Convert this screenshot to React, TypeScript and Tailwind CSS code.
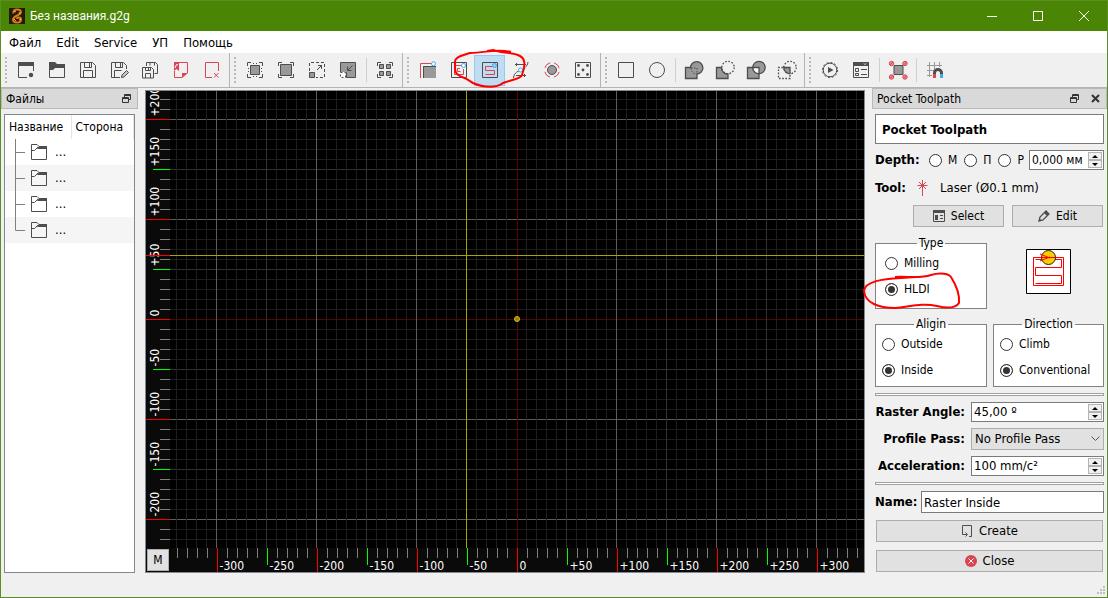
import React, { useEffect, useRef, useState } from 'react';

const DARK = '#4d4d4d';
const RED = '#da4453';
const GRAY = '#999999';
const BLUE = '#3daee9';

const icons: Record<string, React.ReactNode> = {
  new: (
    <>
      <path d="M0 0h16v4H0z" fill={DARK} />
      <path d="M0.5 4v11.5H9M15.5 4v5" fill="none" stroke={DARK} />
      <circle cx="13" cy="13" r="2.2" fill={DARK} />
    </>
  ),
  open: (
    <>
      <path d="M0 0h6l2 2h8v4H6L4 8H0z" fill={DARK} />
      <path d="M0.5 7v8.5h15V5" fill="none" stroke={DARK} />
    </>
  ),
  save: (
    <path d="M0.5 0.5h12l3 3v12H0.5zM4.5 0.5v5h7v-5M9.5 1v4M3.5 15.5v-7h9v7" fill="none" stroke={DARK} />
  ),
  saveAs: (
    <>
      <path d="M9 15.5H0.5V0.5h12l3 3V7M4.5 0.5v5h7v-5M9.5 1v4M3.5 15.5v-7h7" fill="none" stroke={DARK} />
      <path d="M10.5 15.5l0.5-2.5 4.5-4.5 2 2-4.5 4.5z" fill="#c4c4c4" stroke={DARK} />
    </>
  ),
  saveAll: (
    <>
      <path d="M4.5 4V0.5h9l2 2v9h-3M8 0.5v3M12.5 0.5v3" fill="none" stroke={DARK} />
      <path d="M0.5 5.5h9l2 2v8.5h-11zM3.5 5.5v3h5v-3M6.5 6v2M3.5 16v-4.5h5v4.5" fill="none" stroke={DARK} />
    </>
  ),
  exportPdf: (
    <>
      <path d="M1 0h5v9L3.5 7 1 9z" fill={RED} />
      <path d="M2 6l1.5-3.5L5 3" fill="none" stroke="#fff" />
      <path d="M6 0.5h8.5V11M1.5 9v6.5H9" fill="none" stroke={RED} />
      <path d="M9 16v-5h6z" fill={RED} />
    </>
  ),
  closeDoc: (
    <path d="M8 15.5H1.5V0.5h13V9M10 11l4.5 4.5M14.5 11L10 15.5" fill="none" stroke={RED} />
  ),
  fit: (
    <>
      <path d="M0.5 4V0.5H4M12 0.5h3.5V4M15.5 12v3.5H12M4 15.5H0.5V12" fill="none" stroke={DARK} />
      <path d="M3.5 3.5h9v9h-9z" fill={GRAY} stroke={DARK} />
      <path d="M6 1.5h1M9 1.5h1M6 14.5h1M9 14.5h1M1.5 6v1M1.5 9v1M14.5 6v1M14.5 9v1" stroke={DARK} />
    </>
  ),
  fitAll: (
    <>
      <path d="M0.5 4V0.5H4M12 0.5h3.5V4M15.5 12v3.5H12M4 15.5H0.5V12" fill="none" stroke={DARK} />
      <path d="M2.5 2.5h11v11h-11z" fill={GRAY} stroke={DARK} />
    </>
  ),
  zoomIn: (
    <>
      <path d="M0.5 9V0.5h15v15H7" fill="none" stroke={DARK} strokeDasharray="3 2" />
      <path d="M0.5 10.5h5v5h-5z" fill={GRAY} stroke={DARK} />
      <path d="M8 8l4.5-4.5M9 3.5h3.5V7" fill="none" stroke={DARK} />
    </>
  ),
  zoomOut: (
    <>
      <path d="M0.5 0.5h15v15h-9v-5h-6z" fill={GRAY} stroke={DARK} />
      <path d="M12.5 3.5L8 8M7.5 4.5v4h4" fill="none" stroke={DARK} />
      <path d="M0.5 10.5h5v5h-5z" fill="#fff" stroke="#fff" />
      <path d="M0.5 10.5h5v5h-5z" fill="none" stroke={DARK} strokeDasharray="2 2" />
    </>
  ),
  objects: (
    <>
      <path d="M0.5 4V0.5H4M12 0.5h3.5V4M15.5 12v3.5H12M4 15.5H0.5V12" fill="none" stroke={DARK} />
      <path d="M2.5 2.5h4v4h-4zM9.5 2.5h4v4h-4zM2.5 9.5h4v4h-4zM9.5 9.5h4v4h-4z" fill={GRAY} stroke={DARK} />
    </>
  ),
  profile: (
    <>
      <path d="M3 4h13v12H3z" fill={GRAY} />
      <path d="M3.5 16V4.5H16" fill="none" stroke={DARK} />
      <path d="M0.5 16V1.5H12" fill="none" stroke={RED} />
      <circle cx="13.5" cy="1.8" r="2" fill="#fff" stroke={BLUE} />
    </>
  ),
  pocket: (
    <>
      <path d="M0.5 0.5h15v15h-15z" fill="none" stroke={DARK} />
      <path d="M11 3.5H3.5v9h9V7M9 6.5H6.5v3h3" fill="none" stroke={RED} />
      <circle cx="12.5" cy="3.5" r="2" fill="#fff" stroke={BLUE} />
    </>
  ),
  raster: (
    <>
      <path d="M0.5 0.5h15v15h-15z" fill="none" stroke={DARK} />
      <path d="M11 4.5H3.5v4h9v4h-9" fill="none" stroke={RED} />
      <circle cx="12.5" cy="3.5" r="2" fill="#8fcdf3" stroke={BLUE} />
    </>
  ),
  thread: (
    <>
      <path d="M0.5 16C1 10 6 9 8 8s6.5-3 7-8" fill="none" stroke={DARK} />
      <path d="M2 2.5h11M4 1L2.500 2.500 4 4M3 13.5h10M11 12l1.500 1.500L11 15" fill="none" stroke={DARK} />
      <circle cx="7.5" cy="8" r="2" fill="#fff" stroke={BLUE} />
    </>
  ),
  drill: (
    <>
      <circle cx="8" cy="8" r="4.5" fill={GRAY} stroke={DARK} />
      <circle cx="8" cy="8" r="7.4" fill="none" stroke={RED} strokeDasharray="7.6 4" strokeDashoffset="-2" />
    </>
  ),
  points: (
    <>
      <path d="M0.5 0.5h15v15h-15z" fill="none" stroke={DARK} />
      {[[3.5, 3.5], [12.5, 3.5], [8, 8], [3.5, 12.5], [12.5, 12.5]].map(([x, y]) => (
        <circle key={`${x}-${y}`} cx={x} cy={y} r="1.4" fill={DARK} />
      ))}
    </>
  ),
  rect: <path d="M0.5 0.5h15v15h-15z" fill="none" stroke={DARK} />,
  circle: <circle cx="8" cy="8" r="7.5" fill="none" stroke={DARK} />,
  union: (
    <>
      <path d="M-0.5 5.5H4.5a6.2 6.2 0 1 1 6.5 6.5v4.5h-11.5z" fill={GRAY} stroke={DARK} strokeWidth="1.3" />
      <path d="M5 6h6v6M5 6c0 3 2 6 6 6" fill="none" stroke={DARK} strokeDasharray="1.5 1.5" />
    </>
  ),
  subtract: (
    <>
      <path d="M-0.5 5.5H4.5a6.2 6.2 0 0 0 6.5 6.5v4.5h-11.5z" fill={GRAY} stroke={DARK} strokeWidth="1.3" />
      <circle cx="11" cy="5.5" r="6.2" fill="none" stroke={DARK} strokeWidth="1.3" strokeDasharray="1.6 1.6" />
    </>
  ),
  exclude: (
    <>
      <path d="M-0.5 5.5H11v11H-0.5z" fill={GRAY} stroke={DARK} strokeWidth="1.3" />
      <circle cx="11" cy="5.5" r="6.2" fill={GRAY} stroke={DARK} strokeWidth="1.3" />
      <path d="M4.8 5.5H11v6.2A6.2 6.2 0 0 1 4.8 5.5z" fill="#fff" stroke={DARK} strokeWidth="1.3" />
    </>
  ),
  intersect: (
    <>
      <path d="M4 5.5h-4.5v11H11v-4" fill="none" stroke={DARK} strokeWidth="1.3" strokeDasharray="1.6 1.6" />
      <circle cx="11" cy="5.5" r="6.2" fill="none" stroke={DARK} strokeWidth="1.3" strokeDasharray="1.6 1.6" />
      <path d="M4.8 5.5H11v6.2A6.2 6.2 0 0 1 4.8 5.5z" fill={GRAY} stroke={DARK} strokeWidth="1.3" />
    </>
  ),
  run: (
    <>
      <circle cx="8" cy="8" r="6.8" fill="none" stroke={DARK} />
      <circle cx="8" cy="8" r="7.6" fill="none" stroke={DARK} strokeDasharray="2 2" />
      <path d="M6 5l5.500 3L6 11z" fill={DARK} />
    </>
  ),
  form: (
    <>
      <path d="M0 0h16v4H0z" fill={DARK} />
      <path d="M11 1.5l1 1 1-1" fill="none" stroke="#fff" />
      <path d="M0.5 4v11.5h15V4M2.5 6.5h3v3h-3zM2.5 11.5h3v2h-3zM8 7.5h6M8 12.5h6" fill="none" stroke={DARK} />
    </>
  ),
  snap: (
    <>
      <path d="M4 3.5h9v9H4z" fill={GRAY} stroke={DARK} />
      {[[1.5, 1.5], [15, 1.5], [1.5, 15], [15, 15]].map(([x, y]) => (
        <g key={`${x}-${y}`}>
          <circle cx={x} cy={y} r="2.2" fill="#e98f98" stroke={RED} />
          <path d={`M${x - 1.5} ${y + 1.5}l3-3`} stroke={RED} />
        </g>
      ))}
    </>
  ),
  magnet: (
    <>
      <path d="M0 3.5h15M0 8.5h8M0 13.5h5M2.5 0v15M7.5 0v8M12.5 0v5" stroke={GRAY} />
      <path d="M7.5 16v-5a3.5 3.5 0 0 1 7 0v5" fill="none" stroke={DARK} strokeWidth="3" />
      <path d="M6 12h3v4H6z" fill={RED} />
      <path d="M13 12h3v4h-3z" fill={BLUE} />
    </>
  ),
};

const toolbars: { label: string; tools: string[] }[] = [
  { label: 'File', tools: ['new', 'open', 'save', 'saveAs', 'saveAll', 'exportPdf', 'closeDoc'] },
  { label: 'View', tools: ['fit', 'fitAll', 'zoomIn', 'zoomOut', '|', 'objects'] },
  { label: 'Toolpath', tools: ['profile', 'pocket', 'raster', 'thread', 'drill', 'points'] },
  { label: 'Shapes', tools: ['rect', 'circle', '|', 'union', 'subtract', 'exclude', 'intersect'] },
  { label: 'Service', tools: ['run', 'form', '|', 'snap', '|', 'magnet'] },
];

const ToolIcon = ({ name }: { name: string }) => (
  <svg width="16" height="16" viewBox="0 0 16 16" className="overflow-visible">
    {icons[name]}
  </svg>
);

const TitleBar = () => (
  <header className="flex h-[30px] shrink-0 items-center bg-[#4a8505] pl-2 text-white">
    <svg width="16" height="16" viewBox="0 0 16 16">
      <path d="M0 0h16v16H0z" fill="#241a0c" />
      <path d="M4.5 5.5C3 0 12.5 0.5 12 4.5C11.5 7.5 4.5 7.5 4 11.5C4 15.5 12 15.5 12 11.5C12 8.5 8 9 8 11" fill="none" stroke="#e07b12" strokeWidth="2" />
      <path d="M5 3l2 1M10 4l1 2M5 11l2 2M10 12l2-1" stroke="#f7d9a0" strokeWidth="0.8" />
    </svg>
    <h1 className="ml-[5px] flex-1 font-[Roboto,sans-serif] text-[12px]">Без названия.g2g</h1>
    <button aria-label="Minimize" className="flex h-full w-[46px] items-center justify-center">
      <svg width="10" height="10"><path d="M0 5.5h10" stroke="#fff" /></svg>
    </button>
    <button aria-label="Maximize" className="flex h-full w-[46px] items-center justify-center">
      <svg width="10" height="10"><path d="M0.5 0.5h9v9h-9z" fill="none" stroke="#fff" /></svg>
    </button>
    <button aria-label="Close window" className="flex h-full w-[46px] items-center justify-center">
      <svg width="10" height="10"><path d="M0 0l10 10M10 0L0 10" stroke="#fff" /></svg>
    </button>
  </header>
);

const MenuBar = () => (
  <nav className="flex h-[22px] shrink-0 items-center gap-[15px] bg-white pt-px pl-2 text-[13px]">
    {['Файл', 'Edit', 'Service', 'УП', 'Помощь'].map(item => (
      <button key={item}>{item}</button>
    ))}
  </nav>
);

const Toolbar = () => {
  const [active, setActive] = useState('raster');

  return (
    <div className="relative flex h-[35px] shrink-0 border-b border-[#b4b4b4]">
      {toolbars.map((bar, i) => (
        <div
          key={bar.label}
          role="toolbar"
          aria-label={bar.label}
          className={`flex items-center pr-0.5 ${i < toolbars.length - 1 ? 'border-r border-[#b4b4b4]' : ''}`}
        >
          <svg width="9" height="28" className="shrink-0">
            {[0, 1, 2, 3, 4, 5, 6].map(n => (
              <rect key={n} x="4" y={1 + n * 4} width="2" height="2" fill="#b9b9b9" />
            ))}
          </svg>
          {bar.tools.map((tool, n) =>
            tool === '|' ? (
              <span key={n} className="mx-[2px] h-6 w-[2px] border-r border-[#cfcfcf]" />
            ) : (
              <button
                key={tool}
                aria-label={tool}
                onClick={() => setActive(tool)}
                className={`flex h-[31px] w-[31px] items-center border pl-[7px] ${
                  active === tool ? 'border-[#99c9ef] bg-[#c0dcf3]' : 'border-transparent'
                }`}
              >
                <ToolIcon name={tool} />
              </button>
            )
          )}
        </div>
      ))}
      <svg width="80" height="46" className="pointer-events-none absolute top-[-6px] left-[450px]">
        <path
          d="M60 5C45 1 35 6 19 6C10 9 3 10 4 16C4 23 3 27 11 30C17 32 20 35 22 36C33 41 46 41 52 36C60 33 70 32 71 28C74 20 75 12 69 9C61 5 50 6 42 3L36 4"
          fill="none"
          stroke="#f00"
          strokeWidth="2"
        />
      </svg>
    </div>
  );
};

const DockTitle = ({ title, closable }: { title: string; closable?: boolean }) => (
  <div className="flex h-[21px] shrink-0 items-center gap-3 border border-[#b9b9b9] bg-[#d9d9d9] pr-1.5 pl-1">
    <h2 className="flex-1">{title}</h2>
    <button aria-label="Float">
      <svg width="9" height="9">
        <path d="M2.5 3V0.5h6v5H6M2 1.5h7M0.5 3.5h6v5h-6zM0 4.5h6" fill="none" stroke="#333" />
      </svg>
    </button>
    {closable && (
      <button aria-label="Close panel">
        <svg width="9" height="9"><path d="M1 1l7 7M8 1L1 8" stroke="#333" strokeWidth="2" /></svg>
      </button>
    )}
  </div>
);

const FilesDock = () => (
  <aside className="flex w-[137px] shrink-0 flex-col">
    <DockTitle title="Файлы" />
    <div className="mt-[5px] mr-[3px] ml-[3px] flex-1 border border-[#828790] bg-white">
      <table className="w-full border-collapse">
        <thead>
          <tr className="h-6">
            <th className="w-[66px] border-r border-[#e5e5e5] pl-1 text-left font-normal">Название</th>
            <th className="border-r border-[#e5e5e5] pl-1 text-left font-normal">Сторона</th>
          </tr>
        </thead>
        <tbody>
          {[0, 1, 2, 3].map(row => (
            <tr key={row} className="h-[26px] odd:bg-white even:bg-[#f5f5f5]">
              <td colSpan={2} className="p-0">
                <div className="flex items-center">
                  <svg width="26" height="26">
                    <path d={row < 3 ? 'M10.5 0v26M10.5 13.5H20' : 'M10.5 0v13.5H20'} fill="none" stroke="#808080" />
                  </svg>
                  <svg width="16" height="16" className="overflow-visible">
                    <path d="M0.5 0.5H6l2 2h7.5v13H0.5z" fill="none" stroke={DARK} />
                    <path d="M8 2h8v3H6z" fill={DARK} />
                    <path d="M0.5 6.5h3L7 3" fill="none" stroke={DARK} />
                  </svg>
                  <span className="ml-2 text-[13px]">...</span>
                </div>
              </td>
            </tr>
          ))}
        </tbody>
      </table>
    </div>
  </aside>
);

// One grid step is 10 px; the origin is measured from the top left corner of the grid.
const STEP = 10;
const ORIGIN_X = 347.5;
const ORIGIN_Y = 228.5;

const range = (from: number, to: number) => Array.from({ length: Math.max(0, to - from + 1) }, (_, i) => from + i);

const rulerLabel = (n: number) => (n > 0 ? `+${n * 10}` : `${n * 10}`);

const gridColor = (n: number) => {
  if (n === 0) return '#5c0000';
  if (n % 10 === 0) return '#5c5c5c';
  return n % 5 === 0 ? '#333333' : '#1e1e1e';
};

const tickColor = (n: number) => {
  if (n % 10 === 0) return '#ff0000';
  return n % 5 === 0 ? '#00ff00' : '#808080';
};

const tickLength = (n: number) => {
  if (n % 10 === 0) return 24;
  return n % 5 === 0 ? 17 : 10;
};

const byWeight = (a: number, b: number) => tickLength(a) - tickLength(b);

const Canvas = () => {
  const gridRef = useRef<SVGSVGElement>(null);
  const [size, setSize] = useState({ width: 694, height: 457 });

  useEffect(() => {
    const measure = () => {
      if (!gridRef.current) return;
      const box = gridRef.current.getBoundingClientRect();
      setSize({ width: box.width, height: box.height });
    };
    measure();
    window.addEventListener('resize', measure);
    return () => window.removeEventListener('resize', measure);
  }, []);

  const xSteps = range(Math.ceil(-ORIGIN_X / STEP), Math.floor((size.width - ORIGIN_X) / STEP));
  const ySteps = range(Math.ceil((ORIGIN_Y - size.height) / STEP), Math.floor(ORIGIN_Y / STEP));

  return (
    <main className="mt-[2px] ml-[7px] flex min-w-0 flex-1 flex-col border border-[#828790] bg-black">
      <div className="flex min-h-0 flex-1">
        <svg className="h-full w-6 shrink-0 bg-[#0a0a0a]">
          {ySteps.map(n => {
            const y = ORIGIN_Y - n * STEP;
            return (
              <g key={n}>
                {n % 5 === 0 && (
                  <text transform={`translate(13 ${y - 3}) rotate(-90)`} fill="#fff" fontSize="12">
                    {rulerLabel(n)}
                  </text>
                )}
                <path d={`M24 ${y}h-${tickLength(n)}`} stroke={tickColor(n)} />
              </g>
            );
          })}
          <path d="M0 164.5h24" stroke="#f00" />
        </svg>
        <svg ref={gridRef} className="h-full min-w-0 flex-1">
          {[...ySteps].sort(byWeight).map(n => (
            <path key={n} d={`M0 ${ORIGIN_Y - n * STEP}h${size.width}`} stroke={gridColor(n)} />
          ))}
          {[...xSteps].sort(byWeight).map(n => (
            <path key={n} d={`M${ORIGIN_X - (n === 0 ? 0 : 1) + n * STEP} 0v${size.height}`} stroke={gridColor(n)} />
          ))}
          <path d={`M0 164.5h${size.width}M296.5 0v${size.height}`} stroke="#a5a500" />
          <circle cx="347" cy="228" r="2.5" fill="#b07800" stroke="#c8c800" />
        </svg>
      </div>
      <div className="flex h-6 shrink-0">
        <div className="flex w-6 bg-[#0a0a0a] p-px">
          <button className="h-[22px] w-[22px] border border-[#adadad] bg-[#e1e1e1]">M</button>
        </div>
        <svg className="h-6 min-w-0 flex-1 bg-[#0a0a0a]">
          {xSteps.map(n => {
            const x = ORIGIN_X + n * STEP;
            return (
              <g key={n}>
                <path d={`M${x} 0v${tickLength(n)}`} stroke={tickColor(n)} />
                {n % 5 === 0 && (
                  <text x={x + 2} y="22" fill="#fff" fontSize="12">
                    {rulerLabel(n)}
                  </text>
                )}
              </g>
            );
          })}
        </svg>
      </div>
    </main>
  );
};

const Radio = ({ name, label, checked }: { name: string; label: string; checked?: boolean }) => (
  <label className="flex items-center gap-1.5">
    <input
      type="radio"
      name={name}
      defaultChecked={checked}
      className="h-[13px] w-[13px] appearance-none rounded-full border border-[#333] bg-white shadow-[inset_0_0_0_2px_white] checked:bg-[#333]"
    />
    {label}
  </label>
);

const SpinBox = ({ id, value }: { id: string; value: string }) => (
  <div className="flex h-5 min-w-0 flex-1 border border-[#7a7a7a] bg-white">
    <input id={id} defaultValue={value} className="min-w-0 flex-1 pl-0.5 outline-none" />
    <div className="flex w-[15px] flex-col pt-px pr-px">
      <button aria-label="Increase" className="flex h-2 items-center justify-center border border-[#b4b4b4] bg-[#f0f0f0]">
        <svg width="6" height="3"><path d="M0 3l3-3 3 3z" /></svg>
      </button>
      <button aria-label="Decrease" className="flex h-2 items-center justify-center border border-[#b4b4b4] bg-[#f0f0f0]">
        <svg width="6" height="3"><path d="M0 0l3 3 3-3z" /></svg>
      </button>
    </div>
  </div>
);

const PushButton = ({ children, className = '' }: { children: React.ReactNode; className?: string }) => (
  <button className={`flex h-[22px] items-center justify-center gap-1.5 border border-[#adadad] bg-[#e1e1e1] ${className}`}>
    {children}
  </button>
);

const Group = ({ title, children, className = '' }: { title: string; children: React.ReactNode; className?: string }) => (
  <fieldset className={`min-w-0 border border-[#828282] bg-white ${className}`}>
    <legend className="mx-auto h-4 px-0.5 leading-4">{title}</legend>
    {children}
  </fieldset>
);

const Separator = () => <hr className="h-[3px] border border-[#a0a0a0] bg-white" />;

const PocketDock = () => (
  <aside className="ml-[7px] flex w-[235px] shrink-0 flex-col">
    <DockTitle title="Pocket Toolpath" closable />
    <form className="flex flex-col pt-[5px] pr-[3px] pl-[3px]" onSubmit={e => e.preventDefault()}>
      <input
        aria-label="Title"
        defaultValue="Pocket Toolpath"
        className="h-[30px] w-full border border-[#7a7a7a] bg-white pl-1.5 text-[13px] font-bold outline-none"
      />

      <div className="mt-1.5 flex items-center">
        <label htmlFor="depth" className="w-[54px] text-[13px] font-bold">Depth:</label>
        <div className="flex w-[100px] gap-[7px]">
          <Radio name="depth-mode" label="М" />
          <Radio name="depth-mode" label="П" />
          <Radio name="depth-mode" label="Р" />
        </div>
        <SpinBox id="depth" value="0,000 мм" />
      </div>

      <div className="mt-2 flex h-5 items-center text-[13px]">
        <span className="w-[42px] font-bold">Tool:</span>
        <svg width="11" height="16">
          <path d="M5.5 0v16M0.5 5.5h10M2 2l7 7M9 2L2 9" stroke={RED} />
        </svg>
        <span className="ml-3">Laser (Ø0.1 mm)</span>
      </div>

      <div className="mt-[7px] mr-px ml-[38px] flex gap-2">
        <PushButton className="flex-1">
          <svg width="12" height="12">
            <path d="M0 0h12v3H0z" fill={DARK} />
            <path d="M0.5 3v8.5h11V3M7 5.5h3M7 8.5h3" fill="none" stroke={DARK} />
            <path d="M2 5h3v5H2z" fill={DARK} />
          </svg>
          Select
        </PushButton>
        <PushButton className="flex-1">
          <svg width="12" height="12">
            <path d="M1 11l1-4 6-6 3 3-6 6z" fill="none" stroke={DARK} strokeWidth="1.3" />
            <path d="M6 3l3 3 2-2-3-3z" fill={DARK} />
            <path d="M1 11l0.5-2.5L3.5 10.5z" fill={DARK} />
          </svg>
          Edit
        </PushButton>
      </div>

      <div className="mt-2 grid grid-cols-[112px_1fr] gap-x-1.5">
        <Group title="Type" className="relative h-[74px]">
          <div className="flex flex-col gap-2.5 pt-1 pl-[9px]">
            <Radio name="type" label="Milling" />
            <Radio name="type" label="HLDI" checked />
          </div>
          <svg width="104" height="44" className="pointer-events-none absolute top-[20px] left-[-15px]">
            <path
              d="M34 6C46 5 58 8 70 4C80 1 88 3 90 6C95 14 99 22 98 32C94 38 84 37 76 35C62 32 52 35 34 37C18 37 4 32 3 20C4 10 22 8 40 7L55 6"
              fill="none"
              stroke="#f00"
              strokeWidth="2"
            />
          </svg>
        </Group>
        <svg width="45" height="45" className="mt-3.5 ml-[33px]">
          <path d="M0.5 0.5h44v44h-44z" fill="#fff" stroke="#000" />
          <path d="M7.5 8.5h30v28h-30zM9.5 10.5h26v8h-26v8h26v8h-26" fill="none" stroke="#f00" />
          <circle cx="22.5" cy="8.5" r="7" fill="#fc0" stroke="#222" />
          <path d="M13 8.5h16M14 5l10 4M14 12l10-4" stroke="#f00" />
        </svg>
      </div>

      <div className="mt-[7px] grid grid-cols-[112px_1fr] gap-x-1.5">
        <Group title="Aligin" className="h-[71px]">
          <div className="flex flex-col gap-2.5 pt-1 pl-1.5">
            <Radio name="align" label="Outside" />
            <Radio name="align" label="Inside" checked />
          </div>
        </Group>
        <Group title="Direction" className="h-[71px]">
          <div className="flex flex-col gap-2.5 pt-1 pl-1.5">
            <Radio name="direction" label="Climb" />
            <Radio name="direction" label="Conventional" checked />
          </div>
        </Group>
      </div>

      <div className="my-1.5"><Separator /></div>

      <div className="grid grid-cols-[90px_1fr] items-center gap-x-1.5 gap-y-1.5 text-[13px]">
        <label htmlFor="angle" className="text-right font-bold whitespace-nowrap">Raster Angle:</label>
        <SpinBox id="angle" value="45,00 º" />
        <label htmlFor="pass" className="text-right font-bold whitespace-nowrap">Profile Pass:</label>
        <div className="relative">
          <select id="pass" className="block h-[22px] w-full appearance-none border border-[#adadad] bg-[#e1e1e1] pl-[3px]">
            <option>No Profile Pass</option>
          </select>
          <svg width="9" height="6" className="pointer-events-none absolute top-2 right-1">
            <path d="M0.5 0.5l4 4 4-4" fill="none" stroke="#555" />
          </svg>
        </div>
        <label htmlFor="accel" className="text-right font-bold whitespace-nowrap">Acceleration:</label>
        <SpinBox id="accel" value="100 mm/c²" />
      </div>

      <div className="my-1.5"><Separator /></div>

      <div className="flex items-center text-[13px]">
        <label htmlFor="name" className="w-[46px] font-bold">Name:</label>
        <input
          id="name"
          defaultValue="Raster Inside"
          className="h-[22px] min-w-0 flex-1 border border-[#7a7a7a] bg-white pl-0.5 outline-none"
        />
      </div>

      <PushButton className="mx-px mt-[7px] text-[13px]">
        <svg width="12" height="12">
          <path d="M1.5 7V0.5h9v11H8M1.5 6v3.5H6M4.5 7.5l2 2-2 2" fill="none" stroke={DARK} />
        </svg>
        Create
      </PushButton>
      <PushButton className="mx-px mt-2 text-[13px]">
        <svg width="12" height="12">
          <circle cx="6" cy="6" r="6" fill={RED} />
          <path d="M3.5 3.5l5 5M8.5 3.5l-5 5" stroke="#fff" />
        </svg>
        Close
      </PushButton>
    </form>
  </aside>
);

const App = () => (
  <div className="flex h-screen flex-col overflow-hidden border border-[#5a8f22] bg-[#f0f0f0] font-['DejaVu_Sans_Condensed','DejaVu_Sans',sans-serif] text-[12px] leading-4 text-black">
    <TitleBar />
    <MenuBar />
    <Toolbar />
    <div className="flex min-h-0 flex-1">
      <FilesDock />
      <Canvas />
      <PocketDock />
    </div>
    <footer className="flex h-6 shrink-0 items-end justify-end p-0.5">
      <svg width="9" height="9" fill="#bfbfbf">
        <path d="M7 0h2v2H7zM4 3h2v2H4zM7 3h2v2H7zM1 6h2v2H1zM4 6h2v2H4zM7 6h2v2H7z" />
      </svg>
    </footer>
  </div>
);

export default App;
